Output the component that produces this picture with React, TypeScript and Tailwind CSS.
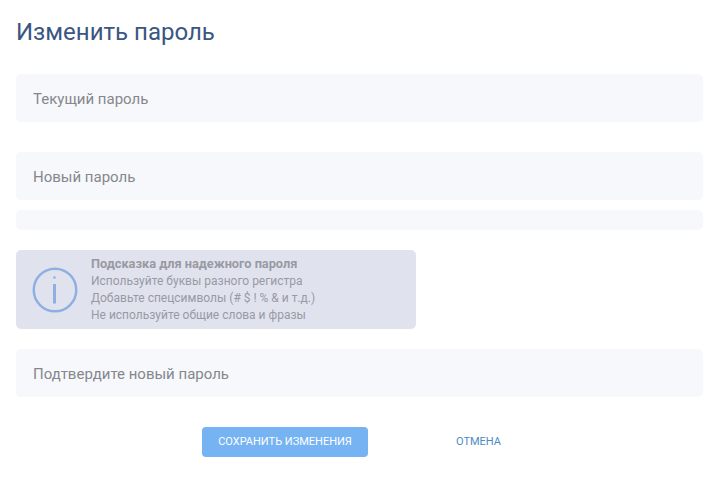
const font = "font-['Roboto',sans-serif]";

function Field({ label }: { label: string }) {
  return (
    <div className="flex h-[48px] items-center rounded-[5px] bg-[#f7f8fc] px-[17px] pt-[2px] text-[15px] leading-none text-[#85878c]">
      {label}
    </div>
  );
}

function InfoIcon() {
  return (
    <svg width="46" height="46" viewBox="0 0 46 46" fill="none" className="shrink-0">
      <circle cx="23" cy="23" r="21.25" stroke="#8fafe3" strokeWidth="2.5" />
      <line x1="22.5" y1="17" x2="22.5" y2="36.5" stroke="#8fafe3" strokeWidth="3" />
      <circle cx="22.5" cy="10.5" r="1.3" fill="#8fafe3" />
    </svg>
  );
}

export default function App() {
  return (
    <div className={`${font} min-h-[487px] w-[715px] bg-white px-4 pt-[16px]`}>
      <h1 className="h-[32px] text-[24px] leading-[32px] font-normal text-[#3a5682]">Изменить пароль</h1>
      <div className="mt-[26px] w-[687px]">
        <Field label="Текущий пароль" />
        <div className="mt-[30px]">
          <Field label="Новый пароль" />
        </div>
        <div className="mt-[10px] h-[20px] rounded-[5px] bg-[#f7f8fc]" />
        <div className="mt-[20px] flex h-[79px] w-[400px] items-center gap-[13px] rounded-[5px] bg-[#e0e3ee] pl-[16px]">
          <InfoIcon />
          <div className="pt-[1px] text-[12px] leading-[16.8px] text-[#989aa3]">
            <div className="text-[12.75px] font-bold">Подсказка для надежного пароля</div>
            <div>Используйте буквы разного регистра</div>
            <div>Добавьте спецсимволы (# $ ! % & и т.д.)</div>
            <div>Не используйте общие слова и фразы</div>
          </div>
        </div>
        <div className="mt-[20px]">
          <Field label="Подтвердите новый пароль" />
        </div>
        <div className="mt-[30px] flex items-center">
          <button className="ml-[186px] h-[30px] w-[166px] rounded-[4px] bg-[#75b3f3] text-[11px] text-white">
            СОХРАНИТЬ ИЗМЕНЕНИЯ
          </button>
          <button className="ml-[88px] text-[11px] text-[#4a8cc4]">ОТМЕНА</button>
        </div>
      </div>
    </div>
  );
}
